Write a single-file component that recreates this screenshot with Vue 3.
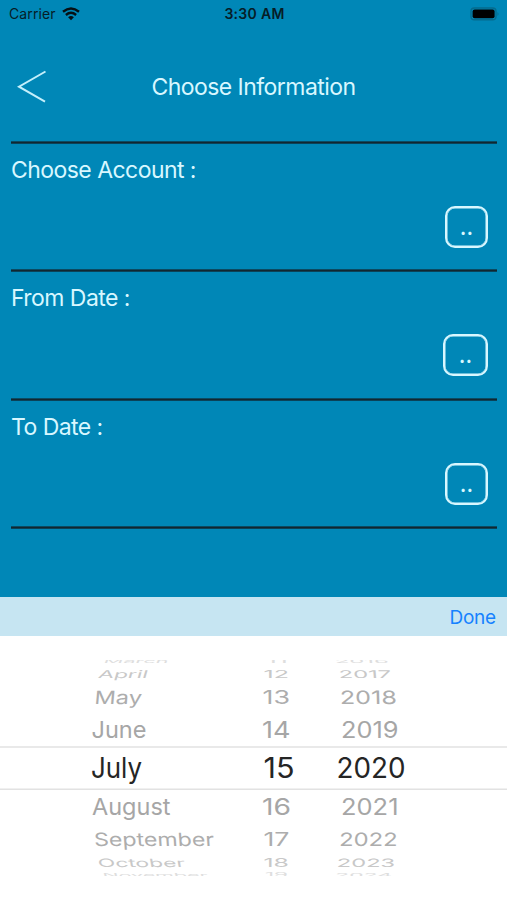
<script setup>
const sections = [
  { label: 'Choose Account :', width: 43 },
  { label: 'From Date :', width: 45 },
  { label: 'To Date :', width: 43 },
]

// Vertical projection of each drum row: baseline, glyph squash, tone, lean.
const rows = [
  { y: 26.5, squash: 0.24, fill: '#dedede', lean: -22 },
  { y: 41.5, squash: 0.46, fill: '#c8c8c8', lean: -16 },
  { y: 67.5, squash: 0.8, fill: '#adadad', lean: -5 },
  { y: 102.3, squash: 1, fill: '#a6a6a6', lean: 0 },
  { y: 141.6, squash: 1, fill: '#252525', lean: 0 },
  { y: 178.7, squash: 1, fill: '#a6a6a6', lean: 0 },
  { y: 210.4, squash: 0.8, fill: '#adadad', lean: 4 },
  { y: 231, squash: 0.5, fill: '#c8c8c8', lean: 10 },
  { y: 241, squash: 0.24, fill: '#dedede', lean: 14 },
]

// Columns lean towards the middle of the drum.
// Each entry: text, left edge, drawn width.
const wheels = [
  { bend: 1, items: [['March', 103, 65], ['April', 97.5, 49.5], ['May', 94, 47.5], ['June', 91.5, 55], ['July', 91, 51],
    ['August', 92, 78.5], ['September', 94.5, 120], ['October', 98.5, 87], ['November', 103, 105]] },
  { bend: 0, items: [['11', 266, 22], ['12', 263.5, 25.5], ['13', 262.5, 27.5], ['14', 262, 28.5], ['15', 263.5, 31],
    ['16', 262, 29], ['17', 263.5, 26], ['18', 263.5, 25.5], ['19', 265, 23]] },
  { bend: -0.3, items: [['2016', 335, 54], ['2017', 339, 52.5], ['2018', 340, 57], ['2019', 341, 57.5], ['2020', 336.5, 69],
    ['2021', 341, 57.5], ['2022', 339, 58.5], ['2023', 336.5, 58.5], ['2024', 335, 57]] },
]
const cells = wheels.flatMap(({ bend, items }) =>
  items.map(([text, x, width], i) => ({
    text, x, width, size: i === 4 ? 28 : 23, ...rows[i], lean: rows[i].lean * bend,
  })),
)
</script>

<template>
  <main class="screen">
    <header class="status">
      <div class="carrier">
        <span>Carrier</span>
        <svg width="18" height="14" viewBox="0 0 18 14">
          <g fill="none" stroke="#061014" stroke-width="2.4">
            <path d="M1 4.8Q9 -1.8 17 4.8" />
            <path d="M3.9 8Q9 3.7 14.1 8" />
          </g>
          <path d="M6.1 10.2Q9 7.8 11.9 10.2L9 13.3Z" fill="#061014" />
        </svg>
      </div>
      <strong class="time">3:30 AM</strong>
      <svg class="battery" width="30" height="14" viewBox="0 0 30 14">
        <rect x="1" y="1" width="25" height="11.8" rx="3.4" fill="none" stroke="#056b8d" stroke-width="1.4" />
        <rect x="2.6" y="2.6" width="22" height="8.7" rx="2" fill="#000" />
        <path d="M27.5 5q2 2 0 4z" fill="#056b8d" />
      </svg>
    </header>
    <nav class="nav">
      <svg class="back" width="30" height="34" viewBox="0 0 30 34">
        <path d="M28.5 1.5L2 16.7L28 31.6" fill="none" stroke="#c4effb" stroke-width="2" />
      </svg>
      <h1 class="title">Choose Information</h1>
    </nav>
    <section v-for="s in sections" :key="s.label" class="section">
      <div class="rule"></div>
      <h2 class="label">{{ s.label }}</h2>
      <button class="more" :style="{ width: s.width + 'px' }"><span>..</span></button>
    </section>
    <div class="end"><div class="rule"></div></div>
    <div class="toolbar"><span class="done">Done</span></div>
    <div class="picker">
      <svg class="drum" width="507" height="264" viewBox="0 0 507 264">
        <defs>
          <clipPath id="drum-window"><rect y="24" width="507" height="216" /></clipPath>
        </defs>
        <path d="M0 111H507M0 153.2H507" stroke="#e2e2e2" stroke-width="1.5" />
        <g clip-path="url(#drum-window)">
          <text
            v-for="c in cells"
            :key="c.text"
            :transform="`translate(${c.x} ${c.y}) skewX(${c.lean}) scale(1 ${c.squash})`"
            :font-size="c.size"
            :fill="c.fill"
            :textLength="c.width"
            lengthAdjust="spacingAndGlyphs"
          >{{ c.text }}</text>
        </g>
      </svg>
    </div>
  </main>
</template>

<style>
body {
  background: #fff;
}
</style>

<style scoped>
.screen {
  width: 507px;
  height: 900px;
  display: flex;
  flex-direction: column;
  overflow: hidden;
  background: #0087b7;
  color: #d8f7ff;
  font-family: Inter, "Liberation Sans", sans-serif;
}
.status {
  height: 27px;
  display: grid;
  grid-template-columns: 1fr auto 1fr;
  align-items: center;
  padding: 0 7px 0 9px;
  color: #061d27;
  font-size: 14px;
}
.carrier {
  display: flex;
  align-items: center;
  gap: 6px;
  letter-spacing: 0.1px;
}
.time {
  font-size: 14px;
  font-weight: 600;
  letter-spacing: 0.3px;
}
.battery {
  justify-self: end;
}
.nav {
  height: 114px;
  display: grid;
  grid-template-columns: 60px 1fr 60px;
  align-items: center;
}
.back {
  margin: 5px 0 0 17px;
}
.title {
  margin: 5px 0 0;
  text-align: center;
  font-size: 23px;
  font-weight: 400;
  white-space: nowrap;
  letter-spacing: -0.54px;
}
.rule {
  height: 3px;
  flex: none;
  background: linear-gradient(#0b4a62 1px, #112730 1px, #112730 2px, #0b4258 2px);
}
.section {
  height: 128.3px;
  flex: none;
  margin: 0 10px 0 11px;
  display: flex;
  flex-direction: column;
}
.label {
  margin: 12px 0 0;
  height: 28px;
  line-height: 29px;
  font-size: 23px;
  font-weight: 400;
  letter-spacing: -0.55px;
}
.more {
  align-self: flex-end;
  box-sizing: border-box;
  height: 42px;
  margin: 22px 9px 0 0;
  padding: 0;
  border: 2px solid #d8f7ff;
  border-radius: 10px;
  box-shadow: inset 0 0 0 0.5px #d8f7ff;
  background: transparent;
  color: #d8f7ff;
  font: 500 22px Inter, sans-serif;
  line-height: 38px;
}
.end {
  flex: 1;
  margin: 0 10px 0 11px;
}
.toolbar {
  height: 39px;
  flex: none;
  box-sizing: border-box;
  display: flex;
  align-items: center;
  justify-content: flex-end;
  padding: 2px 11px 0 0;
  background: #c6e5f2;
  color: #1682ff;
}
.done {
  font-size: 19px;
  letter-spacing: -0.2px;
}
.picker {
  height: 264px;
  flex: none;
  background: #fff;
}
.drum {
  display: block;
}
</style>
